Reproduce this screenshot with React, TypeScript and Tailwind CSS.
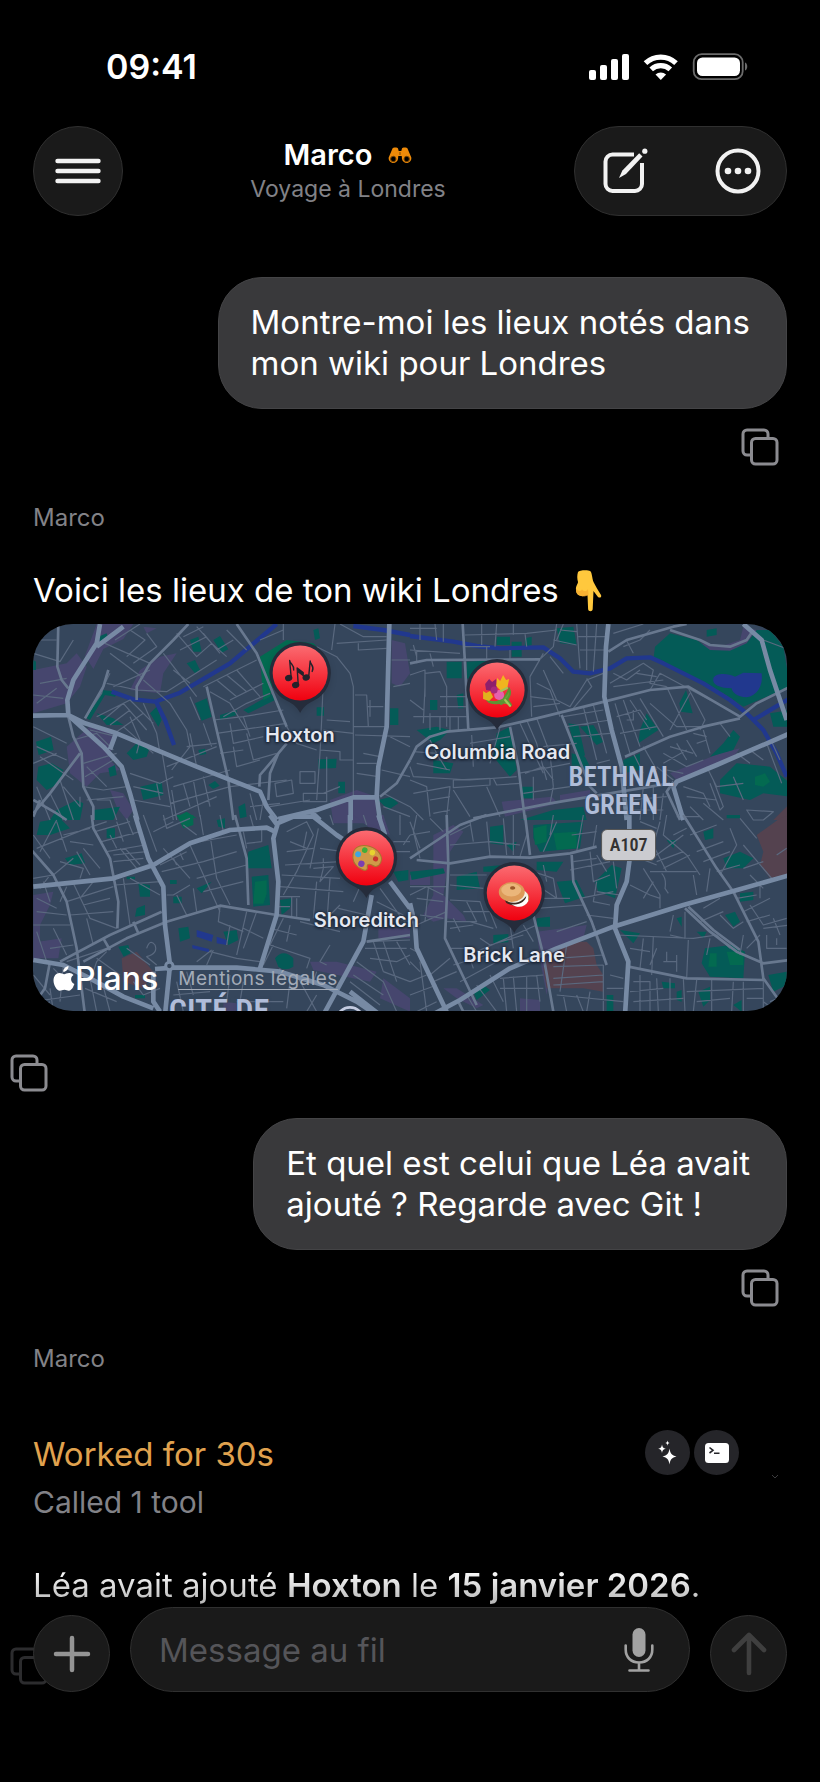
import { useState } from 'react'
import type { ReactNode } from 'react'

interface Tile {
  x: number
  y: number
  purple: string
  brown: string
  green: string
  lawn: string
  lake: string
  canal: string
  minor: string
  mid: string
  major: string
}

// Four quarters of the map, each drawn in its own coordinates
const tiles: Tile[] = [
  {
    x: -9,
    y: -12,
    purple: 'M200 12h110l-30 45-60 30-30 60-25-40zM10 150l100-20 30-30 30 40-20 60-40 50-100 30zM330 150l60-40 50-10-40 60-10 60-90-10zM110 380l80-70 60 30-10 80 30 30-60 10-40 40-50-40zM240 510l40 10 30 50-20 30-30-40zM1085 60l40 10 15 90-30 40-25-10zM900 540l80-30 60 20v80h-130zM340 20l40 5-30 15z',
    brown: '',
    green: 'M480 60l25-10 10 45-25 0zM550 60l20-12 25 40-20 10zM470 130l25-10 15 30-15 10zM495 250l35-15 15 55-30 12zM850 30l15-5 5 30-15 5zM18 365l45-15 8 40-45 15zM25 440l40-10 35 20-10 40-40 20-30-30zM330 500l65-15 5 40-60 15zM865 418l55-2-2 28-53 2zM925 485h20v35h-20zM1080 265h25v50h-25zM360 280l20-20 15 40-10 20zM80 570l60-30 20 10-10 50h-90zM200 280l50 15 30 20-50 0zM235 445l20-10 5 30-20 5zM625 560l20-10 5 40-20 5zM640 270l90-50 5 20-80 40zM290 400l30-30 40 10-10 30-40 10zM1045 540l40-10 20 20-30 20zM170 295l45-85 50 5-10 15-30-5-45 75zM570 285l50-15v15l-50 15zM10 120l8 5v25h-8zM860 262h22v25h-22zM535 495l20-12 14 14-20 10zM505 390l20-4 4 16-20 4zM190 570l80-10-20 40h-60zM205 50l25-10 5 15-25 8z',
    lawn: 'M690 110l80-50 80 10 30 30-150 90-10 40-20 10zM440 590l30-15 30 20z',
    lake: '',
    canal: 'M245 215L310 238 375 245 450 218 600 130 740 12M378 245L405 300 432 375M970 18L1060 30 1140 45',
    minor:
      'M10 60H80M10 100L90 125 130 60M30 190L110 175M10 225L100 235M20 250L80 205M225 70L360 130M240 100L340 175M255 60L330 12M290 110L345 60 300 30M310 130L380 80 350 40M235 150L215 220 165 295M230 190L320 210 410 215 560 120M240 160L200 240M250 200L360 150M340 180L420 250 470 330 480 380 425 450M400 100L500 230M430 150L480 190M440 40L500 110 545 70 500 20M460 50L520 20M450 90L530 50M545 70L590 110M520 40L570 100M590 30L650 90M610 60L560 90M480 230L510 300M520 200L600 160 680 120M540 215L600 250 650 330M560 180L620 230M590 165L650 215M620 150L690 230M600 240L700 190M580 290L650 250 720 220M550 300L640 290 760 270M560 340L770 310M640 290L660 350M600 310L610 370 700 350M650 340L670 420 740 400M610 380L620 440 690 420M570 400L640 390M760 12V60M690 60L760 30M860 80L920 110 960 160 970 200 970 530M915 12L905 90M930 12L1000 50H1070M920 70L1070 60M985 70V90L1070 85M880 180L875 300 870 400 860 540M975 225H1010L1015 320H970M1020 240V290M970 320H1070M975 345L1140 350M880 330L970 340M870 390L930 395V420H970M810 455H855V490H810zM735 490L785 480 790 520 740 530zM820 520H890V545H820zM880 520L930 500M770 320L800 370 860 390M1010 260H1060M890 300L960 305M200 290L300 240 370 310M220 300L280 250 350 330M240 315L300 270M260 335L340 280M180 330L260 350M280 320L370 400M300 290L330 360 320 400M340 250L380 340 390 400M395 390L430 600M410 440L560 380M430 500L600 450M425 510L440 600M460 490L480 560M490 480L510 590M520 470L540 560M420 550L600 500 770 480M400 600L560 530M300 460L390 490 430 470M310 500L400 520M380 490L390 540M310 540L420 560M130 360L200 340 250 390M160 430L260 400M165 470L250 420M170 440L230 500M160 500L220 510 290 500M170 540L280 530M100 500L150 560 150 530M10 320L110 370M10 430L80 400M20 380L110 420M30 410L130 480M60 520L100 600M20 500L60 600M90 480L130 600M200 540L240 540 260 600M470 380L560 370M480 340L500 440M520 310L545 380M660 560L750 550M660 520L680 600M1080 350L1140 380M1055 450L1140 470M1090 200L1140 190M1085 120H1140M1060 520L1140 560M980 460L1045 470M1000 400L1050 410M980 430H1040M1060 560L1140 590M890 410V540M700 540L690 600M720 560L840 540',
    mid: 'M85 12L82 140 95 180 115 205M115 290L130 350 155 400 160 500 190 560V600M150 400L60 520 10 580M620 12L680 100 770 320M530 200L560 330 595 480 610 600M770 370L720 430 690 465 688 500M745 400L720 460 715 540M10 540L80 580 110 600M1050 530L1100 490 1140 420M475 12L430 60 360 130 320 200 320 240M165 295L220 200 235 150M10 590L30 540',
    major: 'M210 12L200 70 130 180 112 240 115 285M200 80L280 20M8 287L115 285 165 310 260 340 500 440 690 515 710 560 740 600M120 290L220 380 275 440 300 520 322 600M1078 12L1070 320 1045 440 1040 530 1050 600M1040 532L970 532 860 570 745 597M962 535V600M258 340L240 388M845 577L870 600',
  },
  {
    x: 1131,
    y: -12,
    purple: 'M870 70l60 10 60-20 10-40 40 10-40 55-70 20-60-10zM780 460l150-60 60-15-20 25-170 70zM275 545l150-15 20 20-160 40zM450 525l90-15v20l-90 15z',
    brown: 'M1090 600l50-50v50z',
    green: 'M735 80L780 40 860 60 900 90 960 92 1010 70 1040 30 1080 30 1120 80 1140 200 1000 260 940 220 880 190 730 120zM110 125h45v50h-45zM170 125l90-5-70 60-20-5zM260 50h40v25h-40zM305 65h30v45h-30zM440 25l50-5 10 55-50-5zM20 330l60-10 40 10-30 30-20 10zM260 340l40-20 20 130-20 20-50-60zM475 310l30 5 20 90-20 20zM510 320l40-5 30 50-20 10zM485 400l40 10 20 40-60 0zM690 330l20-50 35 50-60 40zM640 420l50-20v50l-50 10zM808 250l20-40 20 70-35-5zM940 370l30-40 20 20-20 40-70 20zM930 480l50-50 100 10 60 50v40l-80-10-40 20-90-20zM335 500h35v35h-30zM330 600l100-30 90-10 10 40zM60 240h22v30h-22zM345 55l20-5v25l-20 5zM70 420l60 10-10 30-50 0zM1080 280l60-10v50l-50 0zM140 225l20-5v45h-15zM890 30l30-5v20l-30 5z',
    lawn: 'M1035 470l30-10 15 25-20 15-25-5z',
    lake: 'M910 175C915 160 950 158 975 170L1000 158 1055 160C1060 200 1040 228 1010 232 980 232 965 215 965 205 930 205 905 195 910 175z',
    canal: 'M0 48L130 65 200 78 270 85 400 82 450 115 490 155 540 160 600 145 650 115 720 112 760 130 880 190 960 240 1010 280 1060 330 1100 400 1130 470M1030 300L1140 235',
    minor:
      'M10 75L20 110M30 12V60M75 12L80 60M100 12V65M0 25H80M0 90L150 100M60 100L70 140M20 90V130M165 45L350 40 440 30M215 12V75M260 12L255 80M310 12V45M345 40L350 80M165 80H240M230 80V118M300 90V118M440 12L430 80 390 118 360 170M430 60L500 75M450 30L500 35M460 12L440 60M500 12L510 145M530 12V150M560 12L550 155M505 50H590M510 90H585M400 100L360 170 365 290M420 110L460 160M380 190L420 210 450 290M400 150L440 240 480 260 530 180 580 160M530 175L545 200 490 265M0 165L45 150V230M45 160L90 155 110 200V320M45 200L40 310M90 230H170M90 260H170M0 240L40 270M10 290H170M90 290V330M120 290V330M60 280V330M145 290V330M360 230L440 240M370 260L450 250M350 300L380 370 410 480M270 322L240 430M330 310L400 460M380 295L420 400 430 500M180 370L240 360 300 350M185 345L190 440M10 395L80 400 110 450M20 430L120 450M0 440L10 470 180 480 320 470M60 360L90 420M130 480L240 475V495L130 503zM250 475L260 495 330 490M325 460L480 430M400 380L500 370M345 460L400 440 430 480M340 520L480 500M460 290L580 270M470 320L600 300M490 350L600 340M520 260L560 420M550 255L590 400M430 500L420 550M370 470V540M560 430L600 420M0 480L50 500 60 590M10 520L120 500 110 590M60 540L120 530M70 580L120 570M0 560L40 600M130 510L180 590M230 500L270 590M615 250L660 400M640 240L690 380M690 235L760 350M720 250L800 320 880 320M840 220L780 330M835 205L885 300 870 330M660 240L720 330M770 200L830 330M620 290L690 270 710 300M650 300H670V270M630 340L740 320M600 190L700 130 730 150 720 190 770 200M680 160L740 170M610 160L650 180 690 150M610 200L760 180M720 210L750 160 900 240M670 400L700 460M700 380L740 450M740 440L790 480M760 400L830 440 880 420M780 380L850 400M800 370L830 420M830 360L860 410M880 330L900 400M760 430L830 390M850 340L890 350M770 450L820 460M860 370L890 360M930 310L960 350M980 400L1020 430M1020 390L1060 420M1070 370L1115 490M1085 365L1110 420M900 490L930 570 940 560 910 480M970 470L1000 540M890 440L920 500 1000 490M820 500L880 520 900 560M830 530L920 540M840 560L880 600M880 550L940 600M1010 570L1090 575 1060 600H1030zM800 590H870M700 500L690 600M730 500V600M760 520L750 600M660 540L770 530M660 570L760 570M1100 12L1130 80M1060 60L1140 90M640 80L690 60 720 30M610 40L700 12M650 62L670 100',
    mid: 'M595 95L650 60 790 20 830 12M158 12L165 130 175 330M0 130L50 120 390 118M0 420L20 380 60 350 110 335 260 322 380 295 583 245 720 210 835 200 990 290 1040 250 1140 200M645 410L780 350 880 320 990 295M455 285L500 400 540 500 560 520M300 320L325 440 345 600M190 595L420 550 600 520 780 490M780 30L870 60 900 75 960 80 1010 60 1030 30M790 485L770 515 810 600',
    major: 'M595 12L588 80 583 230 605 330 635 440 650 600M1000 12L1055 60 1080 150 1130 300M1140 340L920 435 800 485 790 500 820 600',
  },
  {
    x: -9,
    y: 573,
    purple: 'M10 240l60-10-10 40-30 60 0 100-20 10zM25 380l70-10-10 60-65 0zM840 440l80 0 120 30-20 30-170-35zM1045 340h95v30h-95zM1060 490l80 60v40l-90-40zM970 0l90 0 20 60-60-20zM580 560l40 5v30h-40z',
    brown: 'M275 430l45-20 50 60-30 50-60-20z',
    green: 'M30 20l60-10 30 30-60 20-40 0zM230 40l25 0v30l-25 0zM105 130l50-15 10 30-45 5zM655 110l60-20 10 70-75 0zM325 205l35 5v35l-30 0zM320 280l25-10v30l-30 5zM445 340l30-5 5 35-30 10zM580 350l40-5 5 30-30 15zM750 255l35-5-5 30-25 20zM735 430q25-30 55 0v25q-25 15-45 0zM430 245h25v20h-25zM500 220l45-20-30 35zM265 395l30-5 6 25-20 10zM1090 170l45-5v30l-30 5zM665 185l50-5 5 90-50 5zM560 15l25-5v30l-20-5zM290 185h25v8h-25zM420 195h20v12h-20zM315 540h30v10h-30z',
    lawn: 'M440 0h50v30l-30 10zM675 200l35-4v40l-10 30-30 0z',
    lake: 'M500 345l50 15-5 20-45-15zM560 365l30 10v15l-30-5zM487 390l50 12v10l-50-12z',
    canal: '',
    minor:
      'M80 15L30 110 M80 20L110 110M10 60L60 130M20 100L170 40 230 20M100 60L180 40M120 80L190 90M60 180L30 220M10 190L70 180 130 130M140 110L180 180M90 140L160 160 150 190M160 100L210 160M195 50L300 20M215 80L330 50M230 110L345 90M260 20L280 80M290 10L310 60M250 120L350 110M270 100L320 160M285 100L330 150M250 140L340 130M240 60L260 100M110 215L90 260M130 205L180 310 260 340M150 250L190 200M160 270L240 250M110 260L250 215M20 250L80 280M20 290L110 300M40 200L60 260M10 330L120 330M20 350L50 440M70 340L110 420M60 400L130 390M120 300L250 290M170 310L190 390M110 440L230 400M190 470L200 440 230 410M350 400Q360 370 375 390 385 415 350 425L380 450M290 400L360 450M255 210L390 200M280 190L300 330M300 190L390 240M340 0L380 110M370 50L430 20M400 100L480 190M390 150L470 110M395 170L520 140 620 110M430 130L440 150M410 130L460 95M450 115L460 135M480 90L570 290M540 60L560 190 600 270M510 80L620 60M500 190L650 150M520 230L640 200M480 210L430 240 410 240M440 240L470 300M490 220L500 290M455 270L465 290M510 0L520 60M400 0L410 40 480 10M460 30L500 60M570 275L565 320 640 350M650 290L620 420M680 290L640 400M640 340L700 370M600 330L590 390M540 410L620 430M550 405L530 450M500 440L545 405M620 430L690 440M570 0L580 50M640 50L650 100M650 85L695 80M695 80V40M660 0L670 35M770 50L830 20 850 60 800 170 760 240M780 80L830 100M770 110L850 100M765 150L930 140M755 180L930 190M830 50L820 100M865 40L840 160M880 130V160L870 200 910 155 850 160M750 215L940 230M860 200L850 310M900 190L890 330M800 250V305M785 245V305M750 245H810M745 275H780M930 270L900 300M810 320L930 350M720 340L800 360M760 310L720 390M780 330L770 380M720 390L840 430 830 460M730 390L700 450M900 390L870 440 890 450M750 460L740 500M860 470L850 500M940 110L870 100M990 215L970 260M925 280L1010 300M1040 260L1120 300M1050 220L1130 330M1030 300L1140 320M1010 380L1140 375M1005 400L1130 400M1020 430L1100 440 1140 420M1030 380L1060 470M1060 380L1100 500M1100 380L1140 450M980 440L1060 500 1100 590M970 480L1060 540M960 500L1050 570M1060 470L1140 500M1120 90L1140 60M1090 80H1140M1080 110H1140M1110 0V60M10 480L60 540M70 460L130 520M100 450L90 560M10 560L150 540M60 520L70 590M165 520L260 560M180 490L200 590M220 515L240 590M310 500L340 540 390 520M200 430L270 480M440 500L460 590M430 540L540 530M470 470L490 540M600 480L590 560M620 560H760M780 500L770 580M800 480L860 590M640 500L630 560M860 540L830 590M1000 0L1010 30M900 0L910 30M10 590L60 560',
    mid: 'M0 100L70 180 110 260 140 400 165 600M185 0L190 40 240 130 265 260 262 340M90 440L240 360 395 290M160 440L290 370 410 320 570 272 740 300 840 315M615 0L650 130 655 270M310 320L325 355M220 370L240 405M60 440L45 520 20 555M1010 380L1140 360M740 25L725 0',
    major: 'M315 0L355 130 400 215 405 330 420 450 405 600M10 215L250 190 370 150 480 85 600 45 710 38 735 50M720 0L742 30 730 70 745 200 740 300 690 460M742 25L790 5 850 5 920 60 950 80M960 0V60M1045 0L1065 60M1080 200L1140 280M1025 240L1000 380 880 600M10 435L100 450 180 490 280 545 370 580M375 462L430 458H620L750 470 880 510 980 560 1040 600M370 470V560L390 590M960 530L1050 600',
  },
  {
    x: 1131,
    y: 573,
    purple: 'M70 60l60-30 30 20-40 60-20 130 60 60 10 20-60-10-40 10-30-20 30-60zM380 350l150-20-10 40-90 30-20 140-15-80zM100 520l40 0 80 50-20 10-60-30zM330 550l60 5v35h-60zM0 180h60v30H0z',
    brown: 'M430 400l60-20 40 0 20 20 10 50 20 30 0 50-60-10-110 0-10-60zM1040 60l70-50 30-10v180l-60 10-30-40 10-40z',
    green: 'M240 35l40-5v60l-40-5zM370 30l150-10-10 80-120 10-20-40zM0 170l100-10 5 15-100 20zM140 185l60-15 10 50-70 5zM440 200l60-5 25 50-60 20zM555 200l50-50 30 10-20 90-50-20zM250 360l45-3v25l-45 3zM190 530l30-20 20 15-40 30zM885 400l80-10 40 20-5 80-100-5-25-40zM940 130l50-20 40 20-30 30-50 0zM880 50l30-10v30l-25 5zM945 300l30-10 15 30-20 15zM990 235l40-5v25l-40 5zM865 530l35-15v40l-20 20zM590 540h20v50h-20zM770 75l30 0-10 25zM970 570l25-15v35zM1075 480l55-10v40l-40 20zM380 310l40-5v30l-40 0zM630 345l60 10-20 30zM755 500l40 5v15h-35zM800 530l15-5v35l-15-5zM290 90l30-10-10 30zM380 140l80 0-20 30-60-5zM800 310l15-5v30zM860 350l30 0-10 20zM950 0h40v10h-40zM220 155l60-5-10 20-50 0z',
    lawn: 'M370 40l40-10v50l-35 10zM430 55l70-5v50l-60 5zM900 415l20 0v40l-25 0zM950 410l50 0v40l-40 0z',
    lake: '',
    canal: '',
    minor:
      'M0 20L30 100M0 60L60 50M20 0L10 50 30 130M60 10L100 50M120 90L240 80 330 90M180 20L190 80M230 20L240 125M280 10L290 120M310 0V120M120 60L180 30M350 60L330 125M400 110L440 20M430 0L420 60M520 0L500 110M560 30L550 95M485 60L560 50M0 215H110M0 240L50 215 100 240M55 220L45 320M20 250L100 260M20 330L110 290M30 300L100 310M120 180H230M120 210L220 220M120 255L210 260 230 320M160 290H240M170 260L200 320 110 320M120 340L190 330M130 310L150 350M180 320L250 340M210 370L240 390 340 360M240 290L260 340M300 330L310 400M340 330L370 380M200 410L380 330M190 440L240 390M120 400L170 400 190 460M130 450L230 420M150 500L280 430M380 210L440 250M370 170L430 190 440 250M380 250H480M380 280L520 270M400 150L410 200M490 140L560 130M480 165L600 140M540 110L550 200 600 180M560 200L550 260 600 270M510 250L610 230M530 300L610 310M440 350L530 320M550 330L570 380M560 120L590 170M610 140L620 220M560 230L630 240M700 160L750 240V280M660 210L720 240 750 250M730 200L700 250M755 175Q770 190 765 220L775 235M690 110H740M690 130L740 150M700 80L740 120 820 60M750 20L730 90 770 170M770 0L760 60 830 120 870 180M740 140L820 110M760 160L840 120M720 170L860 170M790 60L830 40M680 50L730 70M690 20L740 40M840 60L920 30M860 110L940 80M880 140L960 110M900 160L890 230M850 180L860 240M920 170L990 150M930 180L980 90 960 40M1000 90L1085 190M990 10L1040 70M1000 160L1060 140M1020 180L1060 220M1050 210V250M980 250L1040 240M1000 290L1080 250M930 300L970 340 1000 320M880 280L930 250M1020 270L1060 330 1130 310M1010 320L1080 300M1060 340L1140 330M1070 360V400H1130M1100 370V390M1090 310L1110 360M870 320L940 290M825 290V370L780 360M620 360L850 370 920 360 960 400M730 365L725 480M740 400L720 450M760 440H800V470M770 410V440M800 420V440M835 375L830 490M700 370L690 460M780 350L790 300M900 370L890 420M1000 360L990 420M1010 400L1050 360M660 400L720 410M670 500H720V590M660 530L760 520M670 560L820 550M690 480V590M740 490L745 590M780 490V590M820 490L825 590M860 495L850 590M905 495V590M970 500L965 590M830 530L1060 520M860 560L960 550M1010 550H1060M1060 490V590M1000 500V590M1100 590L1060 560M1080 560L1130 540M440 430L580 420M430 455L580 450M430 490L580 480M430 510L580 500M470 390L450 530M500 540L520 590M540 530L530 590M460 540L470 590M580 450V590M440 540L640 560M600 480L640 490M590 520H640M270 490L400 480M280 490L290 590M310 485L320 590M350 485V590M380 480L390 560M270 520H400M200 510L260 590M240 480L280 560M170 540L200 590M0 440L30 470M0 500L50 480M0 540L80 510M20 590L80 560M30 440L50 590M60 480L120 430M70 500L140 470M0 400L20 410M1100 120L1130 100',
    mid: 'M0 130L60 90 150 30 230 0M20 135L120 145 240 125 360 128 480 115 560 95M110 0L115 150 105 370 200 570M345 0L360 120M370 300L400 420 430 590M820 0L920 160 970 230 1045 380 1060 490 1110 560M825 280L900 350 980 410 1060 445 1140 435M835 275L910 345 990 405M655 455L830 490 1060 495M485 120L490 200 545 320 590 450M145 560L160 590H240',
    major: 'M75 595L150 555 300 460 440 400 610 335 820 270 1000 220 1140 180M658 0V140L650 200 620 270 615 340 655 440 645 600M0 265L15 330 20 400 110 590',
  },
]

function MapCanvas() {
  return (
    <svg className="absolute inset-0 h-full w-full" viewBox="0 0 2262 1161" preserveAspectRatio="xMidYMid slice" fill="none" aria-hidden="true">
      <rect width="2262" height="1161" fill="#35465c" />
      {tiles.map((t) => (
        <g key={`a${t.x},${t.y}`} transform={`translate(${t.x} ${t.y})`}>
          <path d={t.purple} fill="#46466e" />
          <path d={t.brown} fill="#54424f" />
          <path d={t.green} fill="#045b57" />
          <path d={t.lawn} fill="#036a50" />
          <path d={t.lake} fill="#21388e" />
        </g>
      ))}
      {tiles.map((t) => (
        <g key={`r${t.x},${t.y}`} transform={`translate(${t.x} ${t.y})`} strokeLinejoin="round">
          <path d={t.canal} stroke="#21388e" strokeWidth="13" />
          <path d={t.minor} stroke="#5a697f" strokeWidth="3.600" />
          <path d={t.mid} stroke="#68788f" strokeWidth="8" />
          <path d={t.major} stroke="#778aa4" strokeWidth="14" />
        </g>
      ))}
      <circle cx="409" cy="1026" r="11" fill="#35465c" stroke="#778aa4" strokeWidth="9" />
      <circle cx="951" cy="1190" r="40" fill="#35465c" stroke="#c3cbe0" strokeWidth="8" />
    </svg>
  )
}

function Notes() {
  return (
    <g fill="#24222b" stroke="#24222b" strokeWidth="1.4" strokeLinecap="round" strokeLinejoin="round">
      <ellipse cx="20.5" cy="37" rx="3" ry="2.4" transform="rotate(-20 20.5 37)" />
      <path d="M23 36.5L21.5 19.5C22 23 26.5 24 25.5 29" fill="none" />
      <ellipse cx="27.5" cy="44" rx="3" ry="2.4" transform="rotate(-20 27.5 44)" />
      <path d="M30 43L29 27l6 4.500v3l-5.500-4" />
      <ellipse cx="38" cy="36.5" rx="3" ry="2.4" transform="rotate(-20 38 36.5)" />
      <path d="M40.5 36L42 20C42 24 47 25 44 30.5" fill="none" />
    </g>
  )
}

function Bouquet() {
  return (
    <g>
      <path d="M22 42c5 5 14 4 20-1l4 6M24 44c8 2 16-2 20-13 3 6-2 12-8 15" fill="#6aa53a" stroke="#5c9434" strokeWidth="2" strokeLinecap="round" />
      <path d="M20 26l4-5 3 3 4-3 1 8-5 4-6-1z" fill="#8e1f6b" />
      <path d="M32 20l3 3 3-6 3 5 3-1-2 10-6 2-5-5z" fill="#f0b51f" />
      <path d="M18 33l3 2 4-2 3 6-4 4-6-2z" fill="#e0b21d" />
      <circle cx="34" cy="37" r="5" fill="#e561ae" />
      <circle cx="29" cy="32" r="3.5" fill="#a62a7c" />
      <path d="M36 33l6-3M40 42l5 6" stroke="#a3c55a" strokeWidth="2" strokeLinecap="round" />
    </g>
  )
}

function Palette() {
  return (
    <g transform="rotate(18 32 32)">
      <path d="M18 32c-1-8 6-12 14-12s16 5 15 12c-1 5-4 6-7 5-4-1-6 1-4 4 1 3-2 4-6 3-6-1-11-5-12-12z" fill="#d09a48" stroke="#a8742c" strokeWidth="1" />
      <circle cx="23" cy="31" r="3" fill="#3fa6e0" />
      <circle cx="28" cy="25" r="2.8" fill="#3fae3a" />
      <circle cx="36" cy="25" r="2.8" fill="#e8d22f" />
      <circle cx="41" cy="30" r="2.6" fill="#c8322b" />
      <circle cx="29" cy="39" r="3.2" fill="#7b3fb0" />
    </g>
  )
}

function Bagel() {
  return (
    <g>
      <ellipse cx="36" cy="37" rx="11" ry="8.5" fill="#c98b49" />
      <ellipse cx="35" cy="36" rx="11" ry="8" fill="#f5efe0" />
      <path d="M22 38c6 6 16 5 22-3l-1 5c-5 5-12 6-19 2z" fill="#3b2b22" />
      <path d="M29 43c7 2 14-2 16-9l1 6c-3 6-10 8-17 3z" fill="#fff" />
      <ellipse cx="29.5" cy="31" rx="13" ry="10" fill="#dc9a58" />
      <ellipse cx="29" cy="29" rx="10" ry="6.5" fill="#ebb67a" />
      <path d="M28 26c1-1 5-1 5 1s-4 2-5 1z" fill="#9a5a2a" />
    </g>
  )
}

const places: { name: string, left: string, top: string, drawing: ReactNode }[] = [
  { name: 'Hoxton', left: '35.4%', top: '4.3%', drawing: <Notes /> },
  { name: 'Columbia Road', left: '61.6%', top: '8.9%', drawing: <Bouquet /> },
  { name: 'Shoreditch', left: '44.2%', top: '52.1%', drawing: <Palette /> },
  { name: 'Brick Lane', left: '63.8%', top: '61.3%', drawing: <Bagel /> },
]

function PlacesMap() {
  return (
    <section aria-label="Plan de Londres" className="relative aspect-[754/387] w-full overflow-hidden rounded-[40px] ring-1 ring-inset ring-white/10">
      <MapCanvas />
      <p className="absolute left-[78%] top-[36%] -translate-x-1/2 text-center font-['Liberation_Sans_Narrow','Roboto_Condensed',Roboto,sans-serif] text-[27px] font-semibold leading-7 text-[#b0bdd9] [text-shadow:0_0_3px_#35465c]">
        BETHNAL<br />GREEN
      </p>
      <p className="absolute left-[79%] top-[53%] -translate-x-1/2 rounded-md border border-[#555] bg-[#cbccd0] px-2 font-['Liberation_Sans_Narrow','Roboto_Condensed',Roboto,sans-serif] text-lg font-semibold leading-[30px] text-[#333]">
        A107
      </p>
      <p className="absolute left-[18%] top-[95%] whitespace-nowrap font-['Liberation_Sans_Narrow','Roboto_Condensed',Roboto,sans-serif] text-[32px] font-semibold leading-9 text-[#b0bdd9] [text-shadow:0_0_3px_#35465c]">
        CITÉ DE
      </p>
      {places.map((p) => (
        <button key={p.name} type="button" className="absolute flex -translate-x-1/2 flex-col items-center" style={{ left: p.left, top: p.top }}>
          <svg width="64" height="74" viewBox="0 0 64 74" aria-hidden="true" className="drop-shadow-md">
            <defs>
              <linearGradient id="pin" x1="0" y1="0" x2="0" y2="1">
                <stop offset="0" stopColor="#fb6b71" />
                <stop offset="1" stopColor="#f0000f" />
              </linearGradient>
            </defs>
            <path d="M32 1a31 31 0 0 1 13 59c-6 3-9 5-13 12-4-7-7-9-13-12A31 31 0 0 1 32 1z" fill="#252c3b" />
            <circle cx="32" cy="32" r="27.5" fill="url(#pin)" />
            {p.drawing}
          </svg>
          <span className="mt-2 whitespace-nowrap text-xl font-semibold leading-6 text-[#e4e8f1] [text-shadow:0_1px_3px_#111827,0_0_3px_#111827]">{p.name}</span>
        </button>
      ))}
      <div className="absolute bottom-3 left-5 flex items-center gap-5">
        <span className="flex items-center text-[32px] font-medium leading-10 text-white">
          <svg width="22" height="26" viewBox="0 0 22 26" fill="currentColor" aria-hidden="true">
            <path d="M15.5 0c.3 3-2.500 6-5.300 5.800C9.900 3.200 12.700.3 15.500 0zM20.500 9c-3.600 2.200-3 7.400.9 9-1 2.900-3.100 6.700-5.400 6.800-1.800.1-2.500-1-4.600-1s-2.900 1-4.600 1C3.800 24.800.5 19 .5 14.500.5 10 3.200 7 6.500 7c1.900 0 3.500 1.200 4.700 1.200S14.300 6.800 16.500 7c1.500.1 3 .7 4 2z" />
          </svg>
          Plans
        </span>
        <a href="#mentions" className="text-[19px] leading-10 tracking-wide text-[#a3abb8] underline underline-offset-4">Mentions légales</a>
      </div>
    </section>
  )
}

function CopyButton({ faded = false }: { faded?: boolean }) {
  return (
    <button type="button" aria-label="Copier" className={faded ? 'block text-[#2c2c2e]' : 'block text-[#8b8b90]'}>
      <svg width="38" height="38" viewBox="0 0 38 38" fill="none" stroke="currentColor" strokeWidth="3" strokeLinejoin="round" aria-hidden="true">
        <path d="M9 27H6a4 4 0 0 1-4-4V6a4 4 0 0 1 4-4h17a4 4 0 0 1 4 4v3" />
        <rect x="10.5" y="10.5" width="25.5" height="25.5" rx="4" />
      </svg>
    </button>
  )
}

function UserMessage({ children }: { children: ReactNode }) {
  return (
    <div className="flex flex-col items-end px-[33px]">
      <p className="rounded-[44px] border border-[#444446] bg-[#39393b] py-6 pl-8 pr-9 text-[33px] leading-[41px] text-white">{children}</p>
      <div className="mr-2 mt-[19px]"><CopyButton /></div>
    </div>
  )
}

function StatusBar() {
  return (
    <div className="flex h-[126px] items-center justify-between pl-[106px] pr-[71px] pt-2">
      <time className="text-[34px] font-semibold leading-10">09:41</time>
      <svg width="161" height="28" viewBox="0 0 161 28" fill="currentColor" aria-hidden="true">
        <rect x="1" y="17" width="7" height="10" rx="2" />
        <rect x="12" y="12" width="7" height="15" rx="2" />
        <rect x="23" y="6" width="7" height="21" rx="2" />
        <rect x="34" y="1" width="7" height="26" rx="2" />
        <g fill="none" stroke="currentColor" strokeWidth="5.2">
          <path d="M57.5 10.2a22 22 0 0 1 30.500 0" />
          <path d="M63.2 16.3a14 14 0 0 1 19.100 0" />
        </g>
        <path d="M72.8 27l-5.300-5.500a7.800 7.800 0 0 1 10.600 0z" />
        <rect x="105.700" y="1.2" width="49" height="25" rx="8" fill="none" stroke="#6b6b6b" strokeWidth="1.8" />
        <rect x="109" y="4.5" width="43" height="18.5" rx="5.5" />
        <path d="M157 9.5c3 1 3 7 0 8z" fill="#6b6b6b" />
      </svg>
    </div>
  )
}

function Header() {
  return (
    <header className="grid grid-cols-[1fr_auto_1fr] items-center px-[33px]">
      <button type="button" aria-label="Menu" className="flex size-[90px] items-center justify-center rounded-full border border-[#303030] bg-[#1a1a1a]">
        <svg width="46" height="26" viewBox="0 0 46 26" stroke="#f2f2f2" strokeWidth="4.4" strokeLinecap="round" aria-hidden="true">
          <path d="M2.5 3h41M2.5 13h41M2.5 23h41" />
        </svg>
      </button>
      <div className="-ml-[124px] text-center">
        <h1 className="flex items-center justify-center gap-4 text-[29px] font-semibold leading-9">
          Marco
          <svg width="24" height="17" viewBox="0 0 24 17" aria-hidden="true">
            <path d="M4.5 1.5C5 .3 9.500.2 10 1.500l.7 2.500h2.600l.7-2.500c.5-1.300 5-1.200 5.500 0l3.800 9a4.600 4.600 0 1 1-9.300 1.500l-.3-3h-3.400l-.3 3a4.600 4.600 0 1 1-9.300-1.500z" fill="#ef8b09" />
            <circle cx="5.3" cy="12" r="2.7" fill="#000" stroke="#7a4604" />
            <circle cx="18.7" cy="12" r="2.7" fill="#000" stroke="#7a4604" />
            <path d="M12 5v3" stroke="#7a4604" />
          </svg>
        </h1>
        <p className="text-[23px] leading-8 text-[#828287]">Voyage à Londres</p>
      </div>
      <div className="flex h-[90px] w-[213px] items-center justify-between justify-self-end rounded-full border border-[#303030] bg-[#1a1a1a] px-[25px]">
        <button type="button" aria-label="Nouveau fil">
          <svg width="48" height="46" viewBox="0 0 48 46" fill="none" stroke="#f2f2f2" strokeWidth="4" aria-hidden="true">
            <path d="M34 6.5H12.5a7 7 0 0 0-7 7V36a7 7 0 0 0 7 7H35a7 7 0 0 0 7-7V15" />
            <path d="M39.2 5.300l3.300 3.300L26 26l-7 4 3.400-7.500z" fill="#f2f2f2" stroke="none" />
            <circle cx="44.8" cy="3.2" r="2.6" fill="#f2f2f2" stroke="none" />
          </svg>
        </button>
        <button type="button" aria-label="Plus d’options">
          <svg width="46" height="46" viewBox="0 0 46 46" fill="#f2f2f2" aria-hidden="true">
            <circle cx="23" cy="23" r="20.5" fill="none" stroke="#f2f2f2" strokeWidth="4" />
            <circle cx="13" cy="23" r="3.3" />
            <circle cx="23" cy="23" r="3.3" />
            <circle cx="33" cy="23" r="3.3" />
          </svg>
        </button>
      </div>
    </header>
  )
}

function HandDown() {
  return (
    <svg width="28" height="43" viewBox="0 0 28 43" role="img" aria-label="👇">
      <path d="M3 3C4 1 13 .5 15 2c2 1 2 7 3.500 11 2 4 4.500 8 7.500 13 1 2-1 3.500-3 2l-4.500-6-.8 18c-.2 3-4.400 3-4.600 0L12.500 26C7 28.500 1 27 1 21c-.5-4 2-6 2-8-1-3-1-7 0-10z" fill="#ffc83d" />
      <path d="M5 26.500c-3-1-4.500-3.500-4-7 2 3 5 3 6 1 2 2.500 5 2 6-.5l.5 6c-2.500 2-6 1.500-8.500.5z" fill="#f3a72e" opacity=".7" />
    </svg>
  )
}

function Composer() {
  const [message, setMessage] = useState('')

  return (
    <form onSubmit={(e) => e.preventDefault()} className="fixed inset-x-0 bottom-0 flex items-end gap-5 px-[33px] pb-[90px]">
      <button type="button" aria-label="Ajouter" className="flex size-[77px] shrink-0 items-center justify-center rounded-full border border-[#303030] bg-[#1a1a1a]">
        <svg width="38" height="38" viewBox="0 0 38 38" stroke="#949494" strokeWidth="4.5" strokeLinecap="round" aria-hidden="true">
          <path d="M19 3v32M3 19h32" />
        </svg>
      </button>
      <div className="flex h-[85px] min-w-0 flex-1 items-center rounded-full border border-[#303030] bg-[#1a1a1a] pl-7 pr-[35px]">
        <input
          type="text"
          aria-label="Message au fil"
          placeholder="Message au fil"
          className="min-w-0 flex-1 bg-transparent text-[33px] leading-10 text-white placeholder:text-[#555559] focus:outline-none"
          value={message}
          onChange={(e) => setMessage(e.target.value)}
        />
        <button type="button" aria-label="Dicter">
          <svg width="30" height="44" viewBox="0 0 30 44" fill="none" stroke="#a2a2a2" strokeWidth="2.6" strokeLinecap="round" aria-hidden="true">
            <rect x="8.5" y="0" width="13" height="29" rx="6.5" fill="#a2a2a2" stroke="none" />
            <path d="M1.7 17.5v4c0 8 5.500 13 13.300 13s13.300-5 13.300-13v-4M15 35v7M5.500 42.500h19" />
          </svg>
        </button>
      </div>
      <button type="submit" aria-label="Envoyer" className="flex size-[77px] shrink-0 items-center justify-center rounded-full border border-[#303030] bg-[#1a1a1a]">
        <svg width="36" height="44" viewBox="0 0 36 44" fill="none" stroke="#3f3f3f" strokeWidth="4.6" strokeLinecap="round" strokeLinejoin="round" aria-hidden="true">
          <path d="M18 41V3M3 18L18 3l15 15" />
        </svg>
      </button>
    </form>
  )
}

export default function App() {
  return (
    <div className="min-h-screen bg-black pb-[90px] font-['Inter',sans-serif] text-white">
      <StatusBar />
      <Header />

      <main className="pt-[61px]">
        <UserMessage>
          Montre-moi les lieux notés dans<br />mon wiki pour Londres
        </UserMessage>

        <article className="px-[33px] pt-9">
          <h2 className="text-2xl leading-8 text-[#828287]">Marco</h2>
          <p className="mb-3 mt-[34px] flex items-center gap-4 text-[33px] leading-[44px]">
            Voici les lieux de ton wiki Londres
            <HandDown />
          </p>
          <PlacesMap />
        </article>
        <div className="pb-[26px] pl-[10px] pt-[43px]"><CopyButton /></div>

        <UserMessage>
          Et quel est celui que Léa avait<br />ajouté ? Regarde avec Git !
        </UserMessage>

        <article className="px-[33px] pt-9">
          <h2 className="text-2xl leading-8 text-[#828287]">Marco</h2>
          <div className="flex items-start pt-[54px]">
            <div className="flex-1">
              <p className="text-[33px] leading-[50px] text-[#e0a24e]">Worked for 30s</p>
              <p className="text-3xl leading-[46px] text-[#828287]">Called 1 tool</p>
            </div>
            <div className="flex items-center gap-1 pt-px">
              <span className="flex size-[45px] items-center justify-center rounded-full bg-[#252529]">
                <svg width="22" height="26" viewBox="0 0 22 26" fill="#fff" aria-hidden="true">
                  <path d="M12.5 8.500c.8 5 2.300 6.900 7 7.900-4.700 1-6.200 2.900-7 8.100-.8-5.200-2.300-7.100-7-8.100 4.700-1 6.200-2.900 7-7.900zM5 4.500c.5 2.800 1.200 3.600 3.800 4.200C6.200 9.300 5.500 10.200 5 13c-.5-2.800-1.200-3.700-3.800-4.300C3.800 8.100 4.500 7.300 5 4.500zM10.500.5c.3 1.800.8 2.200 2.300 2.600-1.500.4-2 .9-2.300 2.600-.3-1.700-.8-2.200-2.300-2.600 1.500-.4 2-.8 2.300-2.600z" />
                </svg>
              </span>
              <span className="flex size-[45px] items-center justify-center rounded-full bg-[#252529]">
                <svg width="24" height="20" viewBox="0 0 24 20" fill="none" stroke="#252529" strokeWidth="1.6" aria-hidden="true">
                  <rect width="24" height="20" rx="3.5" fill="#fff" stroke="none" />
                  <path d="M4.5 4.500L8 7.300 4.500 10M9 10.200h5.500" />
                </svg>
              </span>
            </div>
            <button type="button" aria-label="Détails" className="ml-8 mr-2 mt-[45px]">
              <svg width="8" height="5" viewBox="0 0 8 5" fill="none" stroke="#3c3c3e" aria-hidden="true">
                <path d="M1 1l3 3 3-3" />
              </svg>
            </button>
          </div>
          <p className="mt-[34px] bg-linear-to-b from-white from-20% to-[#a8a8a8] bg-clip-text text-[33px] leading-[52px] text-transparent">
            Léa avait ajouté <strong className="font-semibold">Hoxton</strong> le <strong className="font-semibold">15 janvier 2026</strong>.
          </p>
        </article>
        <div className="pl-[10px] pt-9"><CopyButton faded /></div>
      </main>

      <Composer />
    </div>
  )
}
